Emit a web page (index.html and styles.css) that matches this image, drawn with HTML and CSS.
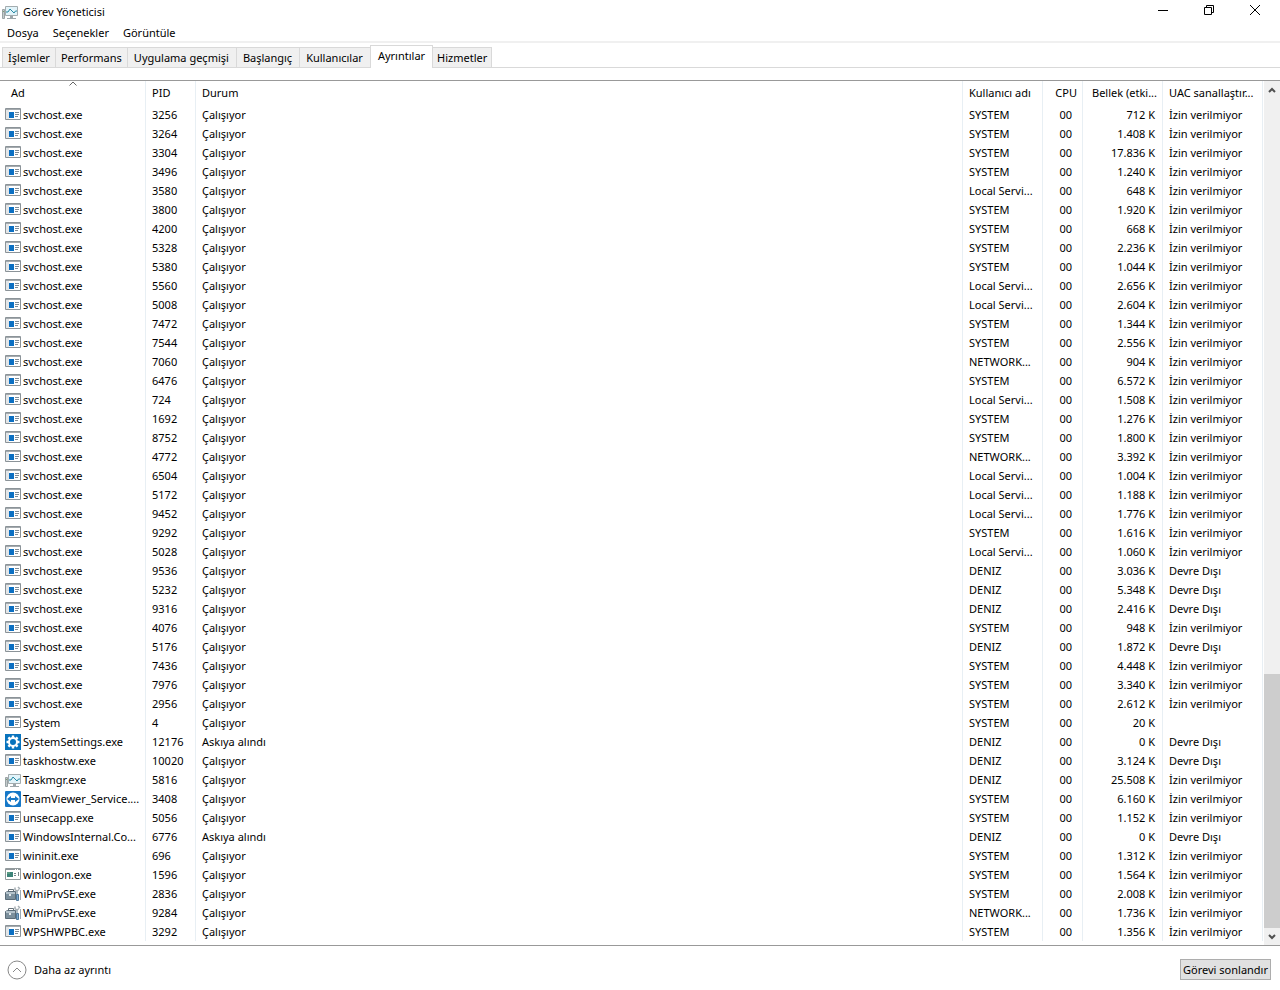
FILE: index.html
```
<!DOCTYPE html>
<html lang="tr">
<head>
<meta charset="utf-8">
<meta name="viewport" content="width=device-width, initial-scale=1">
<title>Görev Yöneticisi</title>
<link rel="stylesheet" href="styles.css">
</head>
<body>
<svg class="sprite" aria-hidden="true">
  <symbol id="i-app" viewBox="0 0 16 13">
    <path fill="#fff" stroke="#8b9398" d="M.5.5h15v11H.5z"/>
    <path fill="#a4aaae" d="M1 1h14v1H1z"/><path fill="#e3e6e8" d="M1 2h3v9H1z"/>
    <path fill="#0b6fc2" d="M4 4h5v6H4z"/>
    <path stroke="#7d8b96" d="M10 4.500h4M10 6.500h4M10 8.500h3"/>
  </symbol>
  <symbol id="i-logon" viewBox="0 0 16 13">
    <path fill="#fff" stroke="#929a9c" d="M.5.5h15v11H.5z"/>
    <path stroke="#8f979b" stroke-dasharray="9 1 1 1" d="M1 1.500h14"/>
    <path fill="#3c8378" d="M2 4h6v5H2z"/><path fill="#5c9c83" d="M2 4h3v2H2z"/>
    <path stroke="#78888a" d="M9 5.500h2M9 7.500h2M13.500 4v4"/>
  </symbol>
  <symbol id="i-gear" viewBox="0 0 16 16">
    <path fill="#0873bd" d="M0 0h16v16H0z"/>
    <path stroke="#fff" stroke-width="2.400" d="M8 1.500v13M1.500 8h13M3.400 3.400l9.200 9.200M12.600 3.400l-9.200 9.200"/>
    <circle cx="8" cy="8" r="4" fill="#0873bd" stroke="#fff" stroke-width="2"/>
  </symbol>
  <symbol id="i-task" viewBox="0 0 16 16">
    <path fill="#c3cacc" stroke="#9aa3a5" d="M.5 5.500h2v9h-2z"/><path fill="#7fa06f" d="M1 7h1v1H1z"/>
    <path fill="#e2f4fa" stroke="#a3acaf" d="M3.500 2.500h12v9h-12z"/>
    <path fill="none" stroke="#2588a3" d="M4 8h2l2-3 4 4 1.500-2H15"/>
    <path fill="#9ca6aa" d="M8 12h3v2H8zM5 14h9v1H5z"/>
  </symbol>
  <symbol id="i-team" viewBox="0 0 16 16">
    <rect width="16" height="16" rx="1" fill="#1678c8"/><circle cx="8" cy="8" r="6.500" fill="#fff"/>
    <path fill="#1678c8" d="M2 8l4-3v2h4V5l4 3-4 3V9H6v2z"/>
  </symbol>
  <symbol id="i-tools" viewBox="0 0 16 16">
    <path fill="none" stroke="#68747c" d="M3.500 5.500v-2h5v2"/>
    <path fill="#7b8f9c" stroke="#5b6c78" d="M.5 6.500l2-1h8v8H.5z"/>
    <path fill="#b4c3cc" d="M1 6h9v2H1z"/><path fill="#e3e9ec" d="M4 8h2v2H4z"/>
    <path fill="none" stroke="#a6afb4" stroke-width="1.500" d="M10 1.500v2l2 1.500 2-1.500M13 1l2 2"/>
    <path stroke="#9babb5" stroke-width="1.500" d="M12 5v4"/><path fill="#7fa6c6" stroke="#4d789b" d="M11.500 8.500h2v6h-2z"/>
    <path stroke="#9dabb3" d="M15.500 4v10"/>
  </symbol>
</svg>
<header class="titlebar">
  <svg class="ico title-ico" aria-hidden="true"><use href="#i-task"/></svg>
  <h1 class="title">Görev Yöneticisi</h1>
  <div class="window-buttons">
    <button class="win" type="button" aria-label="Simge durumuna küçült"><svg viewBox="0 0 12 12"><path d="M1 6.500h10"/></svg></button>
    <button class="win" type="button" aria-label="Önceki boyut"><svg viewBox="0 0 12 12"><path d="M1.500 3.500h7v7h-7zM3.500 3V1.500h7v7H9"/></svg></button>
    <button class="win" type="button" aria-label="Kapat"><svg viewBox="0 0 12 12"><path d="M1 1l10 10M11 1L1 11"/></svg></button>
  </div>
</header>
<nav class="menubar">
  <button class="menu" type="button">Dosya</button>
  <button class="menu" type="button">Seçenekler</button>
  <button class="menu" type="button">Görüntüle</button>
</nav>
<div class="tabs" role="tablist">
  <button class="tab" type="button" role="tab">İşlemler</button>
  <button class="tab" type="button" role="tab">Performans</button>
  <button class="tab wide" type="button" role="tab">Uygulama geçmişi</button>
  <button class="tab" type="button" role="tab">Başlangıç</button>
  <button class="tab" type="button" role="tab">Kullanıcılar</button>
  <button class="tab active" type="button" role="tab" aria-selected="true">Ayrıntılar</button>
  <button class="tab last" type="button" role="tab">Hizmetler</button>
</div>
<main class="details">
  <table class="list">
    <colgroup><col class="c-name"><col class="c-pid"><col class="c-state"><col class="c-user"><col class="c-cpu"><col class="c-mem"><col class="c-uac"></colgroup>
    <thead><tr>
      <th class="sorted" aria-sort="ascending">Ad<svg class="sort" viewBox="0 0 8 5" aria-hidden="true"><path d="M.5 4.500L4 1l3.500 3.500"/></svg></th>
      <th>PID</th><th>Durum</th><th>Kullanıcı adı</th><th class="num">CPU</th><th class="num">Bellek (etki...</th><th>UAC sanallaştır...</th>
    </tr></thead>
    <tbody id="rows"></tbody>
  </table>
  <div class="scrollbar">
    <button class="arrow" type="button" aria-label="Yukarı kaydır"><svg viewBox="0 0 8 6"><path d="M1 5l3-3 3 3"/></svg></button>
    <div class="track"><div class="thumb"></div></div>
    <button class="arrow" type="button" aria-label="Aşağı kaydır"><svg viewBox="0 0 8 6"><path d="M1 1l3 3 3-3"/></svg></button>
  </div>
</main>
<footer class="footer">
  <button class="fewer" type="button"><svg viewBox="0 0 20 20" aria-hidden="true"><circle cx="10" cy="10" r="9"/><path d="M6 12l4-4 4 4"/></svg>Daha az ayrıntı</button>
  <button class="end" type="button">Görevi sonlandır</button>
</footer>
<script src="app.js"></script>
</body>
</html>
```
FILE: styles.css
```
* { box-sizing: border-box; }
body {
  margin: 0;
  min-height: 100vh;
  display: flex;
  flex-direction: column;
  background: #fff;
  color: #000;
  font: 11px/16px "Noto Sans", "Open Sans", sans-serif;
}
button { font: inherit; color: inherit; background: none; border: 0; padding: 0; }
svg { fill: none; stroke-width: 1; }
.sprite { position: absolute; width: 0; height: 0; }
.ico { width: 16px; height: 16px; flex: none; }
.titlebar { display: flex; align-items: center; height: 24px; padding-left: 2px; }
.title { flex: 1; margin: 0 0 0 5px; font-size: 11px; font-weight: 400; }
.window-buttons { display: flex; align-self: flex-start; padding-right: 2px; }
.win { width: 46px; height: 20px; display: grid; place-items: center; }
.win svg { width: 12px; height: 12px; stroke: #000; }
.menubar { display: flex; gap: 14px; height: 19px; padding-left: 7px; border-bottom: 2px solid #f0f0f0; }
.tabs { display: flex; align-items: flex-end; height: 25px; padding-left: 2px; border-bottom: 1px solid #d9d9d9; }
.tab { height: 20px; padding: 0 5px; background: #f0f0f0; border: 1px solid #d9d9d9; border-right: 0; border-bottom: 0; white-space: nowrap; }
.tab.wide, .tab.wide ~ .tab { padding: 0 7px 0 6px; }
.tabs .tab.active { height: 23px; padding: 0 7px 2px; margin-bottom: -1px; background: #fff; border-right: 1px solid #d9d9d9; }
.tabs .tab.tab.last { padding: 0 4px; border-left: 0; border-right: 1px solid #d9d9d9; }
.details { flex: 1; display: flex; align-items: stretch; margin-top: 12px; border-top: 1px solid #999; border-bottom: 1px solid #999; }
.list { flex: 1; min-width: 0; width: 100%; margin-bottom: 4px; table-layout: fixed; border-collapse: separate; border-spacing: 0; align-self: flex-start; }
.c-name { width: 146px; }
.c-pid { width: 50px; }
.c-user, .c-mem { width: 80px; }
.c-cpu { width: 40px; }
.c-uac { width: 100px; }
.list th, .list td { padding: 0 2px 0 6px; text-align: left; font-weight: 400; white-space: nowrap; overflow: hidden; border-right: 1px solid #e8eff4; }
.list th { height: 24px; }
.list td { height: 19px; line-height: 18px; }
.list .sorted { position: relative; padding-left: 11px; }
.sort { position: absolute; top: 0; left: 69px; width: 8px; height: 5px; stroke: #666; }
.list .name { padding: 0 0 0 5px; }
.proc { display: flex; align-items: center; gap: 2px; }
.proc .ico.small { height: 13px; }
.list .num { text-align: right; padding: 0 5px 0 0; }
.list td.cpu { padding-right: 10px; }
.list td.mem { padding-right: 7px; }
.scrollbar { flex: none; width: 16px; margin-left: 1px; display: flex; flex-direction: column; background: #f0f0f0; }
.arrow { height: 17px; display: grid; place-items: center; }
.arrow svg { width: 8px; height: 6px; stroke: #505050; stroke-width: 2; }
.track { flex: 1; display: grid; grid-template-rows: 576fr 254fr; }
.thumb { grid-row: 2; background: #cdcdcd; }
.footer { display: flex; align-items: center; justify-content: space-between; height: 44px; padding: 3px 9px 0 7px; }
.fewer { display: flex; align-items: center; gap: 7px; }
.fewer svg { width: 20px; height: 20px; stroke: #888; }
.end { height: 21px; padding: 0 2px; background: #e1e1e1; border: 1px solid #adadad; }
```
FILE: app.js
```
const users = { S: "SYSTEM", L: "Local Servi...", N: "NETWORK...", D: "DENIZ" };
const uac = { i: "İzin verilmiyor", d: "Devre Dışı", "-": "" };

// pid, user, memory, UAC state, process name, icon, state
const data = `3256 S 712 i|3264 S 1.408 i|3304 S 17.836 i|3496 S 1.240 i|3580 L 648 i|3800 S 1.920 i|4200 S 668 i|5328 S 2.236 i
5380 S 1.044 i|5560 L 2.656 i|5008 L 2.604 i|7472 S 1.344 i|7544 S 2.556 i|7060 N 904 i|6476 S 6.572 i|724 L 1.508 i
1692 S 1.276 i|8752 S 1.800 i|4772 N 3.392 i|6504 L 1.004 i|5172 L 1.188 i|9452 L 1.776 i|9292 S 1.616 i|5028 L 1.060 i
9536 D 3.036 d|5232 D 5.348 d|9316 D 2.416 d|4076 S 948 i|5176 D 1.872 d|7436 S 4.448 i|7976 S 3.340 i|2956 S 2.612 i
4 S 20 - System|12176 D 0 d SystemSettings.exe gear x|10020 D 3.124 d taskhostw.exe|5816 D 25.508 i Taskmgr.exe task
3408 S 6.160 i TeamViewer_Service.... team|5056 S 1.152 i unsecapp.exe|6776 D 0 d WindowsInternal.Co... app x|696 S 1.312 i wininit.exe
1596 S 1.564 i winlogon.exe logon|2836 S 2.008 i WmiPrvSE.exe tools|9284 N 1.736 i WmiPrvSE.exe tools|3292 S 1.356 i WPSHWPBC.exe`;

document.getElementById("rows").innerHTML = data.split(/[|\n]/).map((line) => {
  const [pid, user, mem, mode, name = "svchost.exe", icon = "app", suspended] = line.split(" ");
  const small = icon === "app" || icon === "logon" ? " small" : "";
  return `<tr><td class="name"><span class="proc"><svg class="ico${small}" aria-hidden="true"><use href="#i-${icon}"/></svg>${name}</span></td>
    <td>${pid}</td><td>${suspended ? "Askıya alındı" : "Çalışıyor"}</td><td>${users[user]}</td>
    <td class="num cpu">00</td><td class="num mem">${mem} K</td><td>${uac[mode]}</td></tr>`;
}).join("");
```
